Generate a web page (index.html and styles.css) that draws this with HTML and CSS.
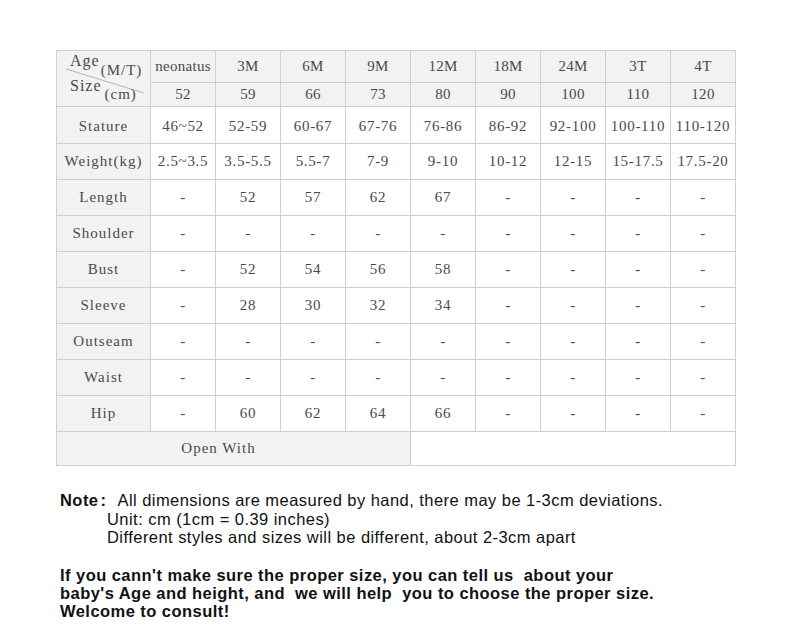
FILE: index.html
```html
<!DOCTYPE html>
<html>
<head>
<meta charset="utf-8">
<link rel="stylesheet" href="styles.css">
</head>
<body>
<div class="page">
<table class="size-table">
<colgroup>
<col class="c-first">
<col class="c"><col class="c"><col class="c"><col class="c"><col class="c"><col class="c"><col class="c"><col class="c"><col class="c">
</colgroup>
<tr class="r-age">
<td class="corner" rowspan="2">
<div class="corner-in">
<div class="lbl lbl-age">Age<span class="sub">(M/T)</span></div>
<div class="lbl lbl-size">Size<span class="sub">(cm)</span></div>
<svg class="diag" width="94" height="56" viewBox="0 0 94 56"><line x1="9" y1="18" x2="87" y2="42" stroke="#b5b5b5" stroke-width="1"/></svg>
</div>
</td>
<td class="hd">neonatus</td><td class="hd">3M</td><td class="hd">6M</td><td class="hd">9M</td><td class="hd">12M</td><td class="hd">18M</td><td class="hd">24M</td><td class="hd">3T</td><td class="hd">4T</td>
</tr>
<tr class="r-size">
<td class="hd">52</td><td class="hd">59</td><td class="hd">66</td><td class="hd">73</td><td class="hd">80</td><td class="hd">90</td><td class="hd">100</td><td class="hd">110</td><td class="hd">120</td>
</tr>
<tr class="r-stature">
<th>Stature</th><td>46~52</td><td>52-59</td><td>60-67</td><td>67-76</td><td>76-86</td><td>86-92</td><td>92-100</td><td>100-110</td><td>110-120</td>
</tr>
<tr class="r-body">
<th>Weight(kg)</th><td>2.5~3.5</td><td>3.5-5.5</td><td>5.5-7</td><td>7-9</td><td>9-10</td><td>10-12</td><td>12-15</td><td>15-17.5</td><td>17.5-20</td>
</tr>
<tr class="r-body">
<th>Length</th><td>-</td><td>52</td><td>57</td><td>62</td><td>67</td><td>-</td><td>-</td><td>-</td><td>-</td>
</tr>
<tr class="r-body">
<th>Shoulder</th><td>-</td><td>-</td><td>-</td><td>-</td><td>-</td><td>-</td><td>-</td><td>-</td><td>-</td>
</tr>
<tr class="r-body">
<th>Bust</th><td>-</td><td>52</td><td>54</td><td>56</td><td>58</td><td>-</td><td>-</td><td>-</td><td>-</td>
</tr>
<tr class="r-body">
<th>Sleeve</th><td>-</td><td>28</td><td>30</td><td>32</td><td>34</td><td>-</td><td>-</td><td>-</td><td>-</td>
</tr>
<tr class="r-body">
<th>Outseam</th><td>-</td><td>-</td><td>-</td><td>-</td><td>-</td><td>-</td><td>-</td><td>-</td><td>-</td>
</tr>
<tr class="r-body">
<th>Waist</th><td>-</td><td>-</td><td>-</td><td>-</td><td>-</td><td>-</td><td>-</td><td>-</td><td>-</td>
</tr>
<tr class="r-body">
<th>Hip</th><td>-</td><td>60</td><td>62</td><td>64</td><td>66</td><td>-</td><td>-</td><td>-</td><td>-</td>
</tr>
<tr class="r-open">
<td class="open" colspan="5">Open With</td><td colspan="5"></td>
</tr>
</table>

<div class="notes">
<div class="note-line"><b class="note-key">Note</b><span class="note-colon">:</span><span class="note-text">All dimensions are measured by hand, there may be 1-3cm deviations.</span></div>
<div class="note-sub">Unit: cm (1cm = 0.39 inches)</div>
<div class="note-sub">Different styles and sizes will be different, about 2-3cm apart</div>
<p class="consult">If you cann't make sure the proper size, you can tell us&nbsp; about your<br>baby's Age and height, and&nbsp; we will help&nbsp; you to choose the proper size.<br>Welcome to consult!</p>
</div>
</div>
</body>
</html>
```
FILE: styles.css
```css
html, body {
  margin: 0;
  padding: 0;
  background: #fff;
}
.page {
  padding: 50px 0 0 56px;
}
.size-table {
  border-collapse: collapse;
  table-layout: fixed;
  width: 679px;
  font-family: "Liberation Serif", "DejaVu Serif", serif;
  font-size: 15px;
  letter-spacing: 0.7px;
  color: #4a4a4a;
}
.c-first { width: 94px; }
.c { width: 65px; }
.size-table td, .size-table th {
  border: 1px solid #cfcfcf;
  text-align: center;
  vertical-align: middle;
  padding: 0;
  white-space: nowrap;
  font-weight: normal;
}
.size-table th {
  background: #f2f2f2;
  letter-spacing: 1px;
}
.hd {
  background: #f2f2f2;
}
.size-table .hd { letter-spacing: 0.3px; }
.r-age { height: 31px; }
.r-size { height: 24px; }
.r-stature { height: 37px; }
.r-body { height: 36px; }
.r-open { height: 34px; }
.r-stature td, .r-stature th {
  padding-top: 2px;
}
.corner {
  background: #f2f2f2;
  padding: 0;
}
.corner-in {
  position: relative;
  height: 55px;
  text-align: left;
}
.lbl {
  position: relative;
  z-index: 1;
  font-size: 16px;
  letter-spacing: 1px;
}
.lbl-age {
  padding: 1px 0 0 13px;
  height: 25px;
  line-height: 18px;
}
.lbl-size {
  padding: 0 0 0 13px;
  line-height: 18px;
}
.sub {
  position: relative;
  top: 9px;
  font-size: 15px;
  margin-left: 1px;
}
.lbl-size .sub { top: 8px; margin-left: 3px; }
.diag {
  position: absolute;
  left: 0;
  top: 0;
}
.size-table .open {
  background: #f2f2f2;
  padding: 0 30px 0 0;
  letter-spacing: 1px;
}
.notes {
  font-family: "Liberation Sans", Arial, sans-serif;
  color: #111;
  font-size: 16.5px;
  letter-spacing: 0.45px;
  margin-top: 25px;
  margin-left: 4px;
}
.note-line, .note-sub {
  line-height: 18.5px;
}
.note-key {
  font-weight: bold;
}
.note-colon {
  font-weight: bold;
  margin-left: 2px;
  margin-right: 11px;
}
.note-sub {
  padding-left: 47px;
}
.consult {
  margin: 19px 0 0 0;
  font-weight: bold;
  line-height: 18px;
  letter-spacing: 0.45px;
}
```
